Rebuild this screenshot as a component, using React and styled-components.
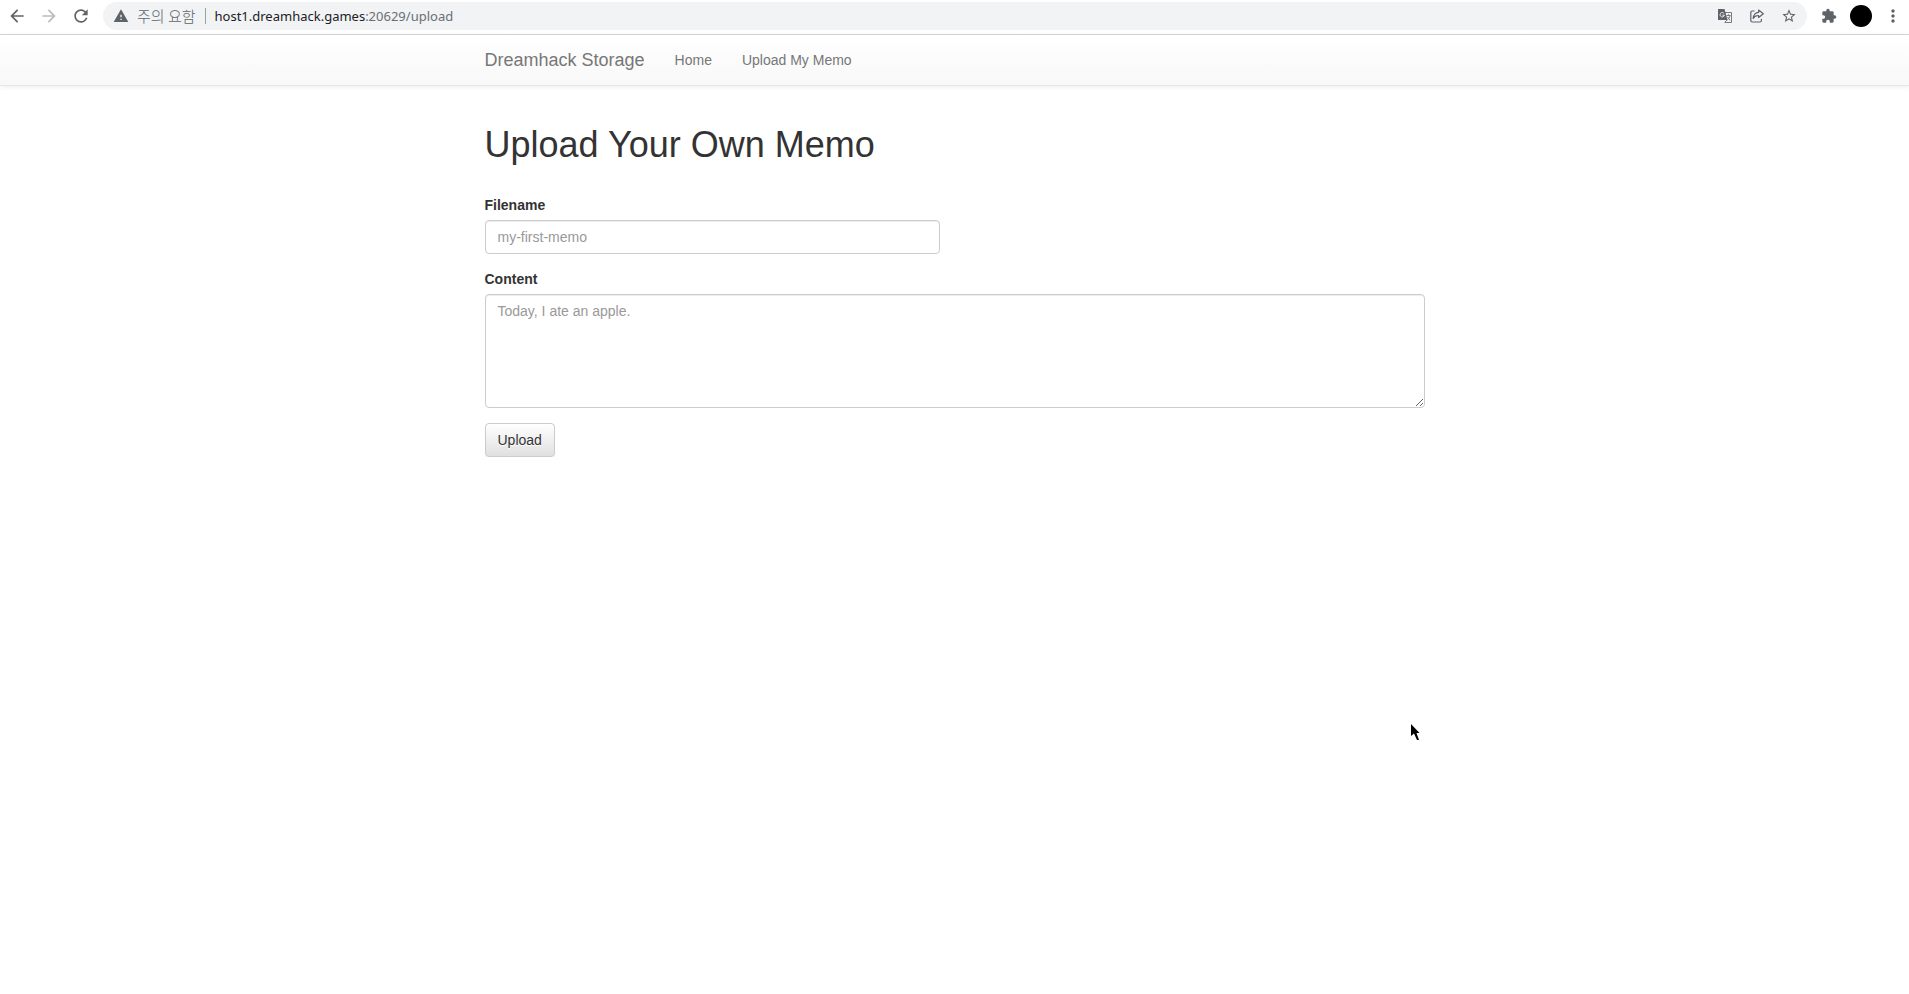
import React, { useState } from "react";
import styled, { createGlobalStyle } from "styled-components";
import {
    MdArrowBack,
    MdArrowForward,
    MdRefresh,
    MdWarning,
    MdStarBorder,
    MdExtension,
    MdMoreVert,
} from "react-icons/md";

const GlobalStyle = createGlobalStyle`
    * {
        box-sizing: border-box;
    }
    body {
        margin: 0;
        background: #fff;
        color: #333;
        font-family: "Helvetica Neue", Helvetica, Arial, "Liberation Sans", sans-serif;
        font-size: 14px;
        line-height: 20px;
    }
`

// browser bar
let Toolbar = styled.div`
    display: flex;
    align-items: center;
    gap: 6px;
    padding: 2px 0 4px 1px;
    border-bottom: 1px solid #d5d7da;
    background: #fff;
`
let ButtonGroup = styled.div`
    display: flex;
    align-items: center;
`
let IconButton = styled.button`
    display: flex;
    align-items: center;
    justify-content: center;
    width: 32px;
    height: 28px;
    padding: 0;
    border: 0;
    background: none;
    color: ${(props) => (props.disabled ? "#babcbe" : "#5f6368")};
`
let AddressBar = styled.div`
    flex: 1;
    display: flex;
    align-items: center;
    height: 28px;
    padding: 0 2px 0 10px;
    border-radius: 14px;
    background: #f1f3f4;
    color: #5f6368;
`
let Warning = styled.span`
    display: flex;
    align-items: center;
    gap: 8px;
    padding-right: 9px;
    font-family: "Noto Sans CJK KR", sans-serif;
    font-size: 15px;
    font-weight: 300;
`
let Url = styled.div`
    flex: 1;
    padding-left: 9px;
    border-left: 1px solid #9aa0a6;
    font-family: "Noto Sans", "Open Sans", sans-serif;
    font-size: 13px;
    line-height: 16px;
    color: #6b6f74;
`
let Host = styled.span`
    color: #202124;
`
let Avatar = styled.span`
    width: 22px;
    height: 22px;
    border-radius: 50%;
    background: #000;
`

// page
let Navbar = styled.nav`
    margin-bottom: 20px;
    border-bottom: 1px solid #e7e7e7;
    background: linear-gradient(to bottom, #fff, #f8f8f8);
    box-shadow: 0 1px 5px rgba(0, 0, 0, 0.075);
`
let Container = styled.div`
    max-width: 970px;
    margin: 0 auto;
    padding: 0 15px;
`
let NavInner = styled(Container)`
    display: flex;
    align-items: center;
    height: 50px;
`
let Brand = styled.a`
    padding-right: 15px;
    color: #777;
    font-size: 18px;
    text-decoration: none;
`
let NavLink = styled.a`
    padding: 15px;
    color: #777;
    text-decoration: none;
    text-shadow: 0 1px 0 rgba(255, 255, 255, 0.25);
`
let Title = styled.h1`
    margin: 0 0 30px;
    padding-top: 19px;
    font-size: 36px;
    font-weight: 500;
    line-height: 40px;
`
let FormGroup = styled.div`
    width: ${(props) => props.$width || "100%"};
    margin-bottom: 15px;
`
let Label = styled.label`
    display: block;
    margin-bottom: 5px;
    font-weight: 700;
`
let Input = styled.input`
    display: block;
    width: 100%;
    height: 34px;
    padding: 6px 12px;
    border: 1px solid #ccc;
    border-radius: 4px;
    background: #fff;
    box-shadow: inset 0 1px 1px rgba(0, 0, 0, 0.075);
    color: #555;
    font: inherit;

    &::placeholder {
        color: #999;
    }
`
let TextArea = styled(Input)`
    height: auto;
    resize: vertical;
`
let UploadBtn = styled.button`
    padding: 6px 12px;
    border: 1px solid #ccc;
    border-radius: 4px;
    background: linear-gradient(to bottom, #fff, #e0e0e0);
    box-shadow: inset 0 1px 0 rgba(255, 255, 255, 0.15), 0 1px 1px rgba(0, 0, 0, 0.075);
    color: #333;
    font: inherit;
    text-shadow: 0 1px 0 #fff;
`
let Pointer = styled.svg`
    position: fixed;
    left: 1411px;
    top: 724px;
    pointer-events: none;
`

function TranslateIcon() {
    return (
        <svg width="14" height="14" viewBox="0 0 14 14" fill="none">
            <path d="M7 3.5H13.5V13.5H7" stroke="#777b7f" />
            <path d="M0 0H6.5L9.5 11H0Z" fill="#5f6368" />
            <path d="M6 4.4A2.2 2.2 0 1 0 6.4 6.2H4.4" stroke="#f1f3f4" />
            <path d="M8.5 6.5H12.5M10.5 5.3V6.5M12 6.5C11.6 8.5 10.6 10 9.3 11M9.6 8C10.4 9.5 11.2 10.5 12.2 11.2M6.5 13.5L9 11" stroke="#777b7f" />
        </svg>
    )
}

function ShareIcon() {
    return (
        <svg width="14" height="14" viewBox="0 0 14 14" fill="none" stroke="#5f6368" strokeWidth="1.2" strokeLinejoin="round">
            <path d="M4.5 2H2.2Q0.8 2 0.8 3.5V11.5Q0.8 13 2.2 13H10Q11.4 13 11.4 11.5V10" />
            <path d="M8.6 1L13.3 4.8L8.6 8.5V6.5C6 6.4 4.4 7.4 3.2 9.4C3.5 5.8 5.5 3.6 8.6 3.3Z" />
        </svg>
    )
}

function BrowserBar() {
    return (
        <Toolbar>
            <ButtonGroup>
                <IconButton aria-label="Back"><MdArrowBack size={20} /></IconButton>
                <IconButton aria-label="Forward" disabled><MdArrowForward size={20} /></IconButton>
                <IconButton aria-label="Reload"><MdRefresh size={20} /></IconButton>
            </ButtonGroup>
            <AddressBar>
                <Warning><MdWarning size={16} />주의 요함</Warning>
                <Url><Host>host1.dreamhack.games</Host>:20629/upload</Url>
                <IconButton aria-label="Translate"><TranslateIcon /></IconButton>
                <IconButton aria-label="Share"><ShareIcon /></IconButton>
                <IconButton aria-label="Bookmark"><MdStarBorder size={16} /></IconButton>
            </AddressBar>
            <ButtonGroup>
                <IconButton aria-label="Extensions"><MdExtension size={16} /></IconButton>
                <IconButton aria-label="Profile"><Avatar /></IconButton>
                <IconButton aria-label="Menu"><MdMoreVert size={20} /></IconButton>
            </ButtonGroup>
        </Toolbar>
    )
}

function App() {

    let [filename, setFilename] = useState('')
    let [content, setContent] = useState('')

    return (
        <>
            <GlobalStyle />
            <BrowserBar />
            <Navbar>
                <NavInner>
                    <Brand href="#">Dreamhack Storage</Brand>
                    <NavLink href="#">Home</NavLink>
                    <NavLink href="#upload">Upload My Memo</NavLink>
                </NavInner>
            </Navbar>
            <Container as="main">
                <Title>Upload Your Own Memo</Title>
                <form onSubmit={(e) => e.preventDefault()}>
                    {/* 6 of 12 columns, less the gutter */}
                    <FormGroup $width="calc(50% - 15px)">
                        <Label htmlFor="filename">Filename</Label>
                        <Input
                            id="filename"
                            type="text"
                            placeholder="my-first-memo"
                            value={filename}
                            onChange={(e) => setFilename(e.target.value)}
                        />
                    </FormGroup>
                    <FormGroup>
                        <Label htmlFor="content">Content</Label>
                        <TextArea
                            as="textarea"
                            id="content"
                            rows={5}
                            placeholder="Today, I ate an apple."
                            value={content}
                            onChange={(e) => setContent(e.target.value)}
                        />
                    </FormGroup>
                    <UploadBtn type="submit">Upload</UploadBtn>
                </form>
            </Container>
            <Pointer width="10" height="18" viewBox="0 0 10 18">
                <path d="M0 0V12L3 9.5L6 16H8L5.5 9H8.5Z" fill="#000" />
            </Pointer>
        </>
    )
}

export default App;
